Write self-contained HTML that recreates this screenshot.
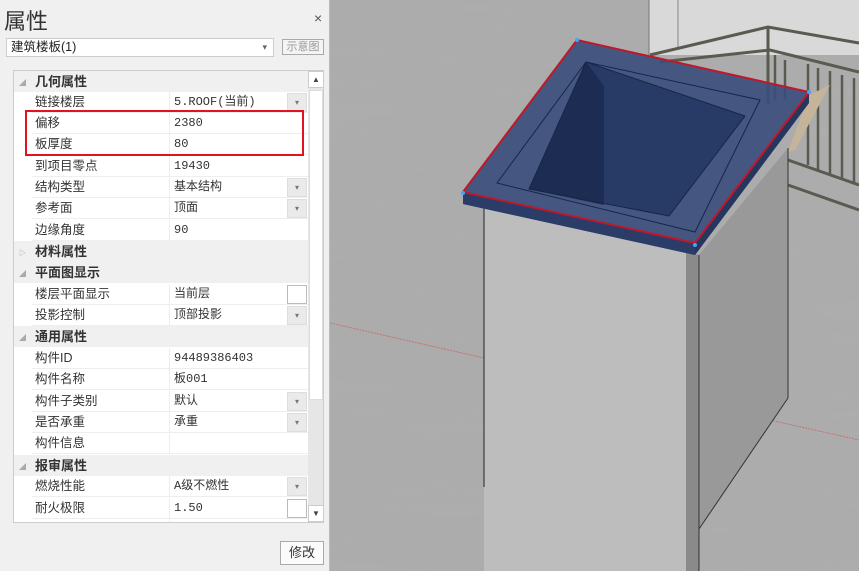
<!DOCTYPE html>
<html><head><meta charset="utf-8"><style>
*{margin:0;padding:0;box-sizing:border-box}
body{width:859px;height:571px;overflow:hidden;background:#a9a9a9;font-family:"Liberation Sans","Noto Sans CJK SC",sans-serif;position:relative}
#panel{position:absolute;left:0;top:0;width:330px;height:571px;background:#f0f0f0;border-right:1px solid #bbb}
.title{position:absolute;left:4px;top:4px;font-size:22px;color:#333}
.close{position:absolute;left:314px;top:10px;font-size:14px;color:#555}
.combo{position:absolute;left:6px;top:38px;width:268px;height:19px;background:#fff;border:1px solid #ccc;font-size:12.5px;padding:0 4px;line-height:17px;color:#222}
.combo:after{content:"▾";position:absolute;right:6px;top:0;font-size:9px;color:#666}
.btn1{position:absolute;left:282px;top:39px;width:42px;height:16px;border:1px solid #aaa;background:#f4f4f4;font-size:11px;color:#999;text-align:center;line-height:14px}
.grid{position:absolute;left:13px;top:70px;width:311px;height:453px;background:#fff;border:1px solid #ccc;overflow:hidden}
.row{position:absolute;left:0;height:21px;width:294px;font-size:12.5px;color:#333}
.row .n{position:absolute;left:18px;top:0;width:138px;height:21px;line-height:21px;padding-left:3px;border-bottom:1px solid #eee;border-right:1px solid #eee}
.row .v{position:absolute;left:156px;top:0;width:138px;height:21px;line-height:21px;padding-left:4px;font-family:"Liberation Mono","Noto Sans CJK SC",monospace;font-size:12px;border-bottom:1px solid #eee}
.row.h{background:#f0f0f0;font-weight:bold;font-size:13px}
.row.h span{position:absolute;left:21px;line-height:21px}
.row.h i{position:absolute;left:5px;top:7px;font-style:normal;font-size:7px;color:#aaa}
.dd{position:absolute;left:273px;top:1px;width:20px;height:19px;background:#eaeaea;border:1px solid #ddd;font-size:8px;color:#777;text-align:center;line-height:18px}
.wb{position:absolute;left:273px;top:1px;width:20px;height:19px;background:#fff;border:1px solid #bbb}
.sb{position:absolute;left:294px;top:0;width:16px;height:451px;background:#e6e6e6}
.sb .th{position:absolute;left:1px;top:19px;width:14px;height:310px;background:#fff;border:1px solid #ddd}
.sb .up,.sb .dn{position:absolute;left:0;width:16px;height:17px;background:#fff;border:1px solid #ccc;font-size:8px;text-align:center;line-height:15px;color:#444}
.redbox{position:absolute;left:25px;top:110px;width:279px;height:46px;border:2.5px solid #e0141e}
.mod{position:absolute;left:280px;top:541px;width:44px;height:24px;border:1px solid #aaa;background:#fbfbfb;font-size:13px;text-align:center;line-height:22px;color:#333}
</style></head><body>
<svg style="position:absolute;left:0;top:0" width="859" height="571">
<defs><filter id="n"><feTurbulence baseFrequency="0.01 0.05" numOctaves="2" seed="3"/><feColorMatrix values="0 0 0 0 0.4 0 0 0 0 0.4 0 0 0 0 0.4 0 0 0 -1.5 1.0"/></filter></defs>
<rect x="330" y="0" width="529" height="571" fill="#adadad"/>
<rect x="330" y="0" width="529" height="571" filter="url(#n)" opacity="0.35"/>
<rect x="649" y="0" width="210" height="55" fill="#d9d9d9"/>
<line x1="678" y1="0" x2="678" y2="50" stroke="#888"/>
<line x1="649" y1="0" x2="649" y2="55" stroke="#777"/>
<g stroke="#5a5a50" stroke-width="3" fill="none">
<polyline points="650,55 768,27 859,43"/><polyline points="660,62 770,50 859,72"/>
<line x1="768" y1="27" x2="768" y2="105"/>
<polyline points="788,160 859,185"/><polyline points="788,185 859,210"/>
</g>
<g stroke="#5a5a50" stroke-width="2.5">
<line x1="775" y1="55" x2="775" y2="100"/><line x1="785" y1="60" x2="785" y2="100"/>
<line x1="808" y1="64" x2="808" y2="165"/><line x1="818" y1="68" x2="818" y2="170"/><line x1="830" y1="71" x2="830" y2="175"/><line x1="842" y1="75" x2="842" y2="178"/><line x1="854" y1="78" x2="854" y2="182"/>
</g>
<polygon points="809,95 830,85 795,150 788,152" fill="#c6b49a"/>
<line x1="330" y1="323" x2="484" y2="358" stroke="#c66" stroke-width="0.8" stroke-dasharray="2,1"/>
<line x1="770" y1="420" x2="859" y2="440" stroke="#c66" stroke-width="0.8" stroke-dasharray="2,1"/>
<polygon points="484,207 699,255 699,571 484,571" fill="#bdbdbd"/>
<polygon points="686,252 699,255 699,571 686,571" fill="#8a8a8a"/>
<polygon points="699,255 788,148 788,398 699,529" fill="#999"/>
<line x1="484" y1="207" x2="484" y2="487" stroke="#222"/>
<line x1="699" y1="255" x2="699" y2="571" stroke="#333"/>
<line x1="788" y1="148" x2="788" y2="398" stroke="#333"/>
<line x1="699" y1="529" x2="788" y2="398" stroke="#333"/>
<polygon points="463,192 577,40 809,92 809,103 695,255 463,204" fill="#3a4c7c" opacity="0.9"/>
<polygon points="463,192 695,243 695,255 463,204" fill="#2b3c68"/>
<polygon points="695,243 809,92 809,103 695,255" fill="#26375f"/>
<polygon points="529,189 586,62 745,116 669,216" fill="#283a66"/>
<polygon points="529,189 586,62 604,86 604,205" fill="#1d2c52"/>
<g stroke="#182548" stroke-width="1" fill="none">
<polygon points="497,183 586,62 760,100 695,232"/>
<polygon points="529,189 586,62 745,116 669,216"/>
</g>
<polygon points="463,192 577,40 809,92 695,243" fill="none" stroke="#c0182a" stroke-width="2"/>
<g fill="#4aa0ff"><circle cx="577" cy="40" r="2"/><circle cx="809" cy="92" r="2"/><circle cx="695" cy="245" r="2"/><circle cx="463" cy="193" r="2"/></g>
</svg>
<div id="panel">
<div class="title">属性</div><div class="close">×</div>
<div class="combo">建筑楼板(1)</div><div class="btn1">示意图</div>
<div class="grid">
<div class="row h" style="top:0"><i>◢</i><span>几何属性</span></div>
<div class="row" style="top:21px"><div class="n">链接楼层</div><div class="v">5.ROOF(当前)</div><div class="dd">▾</div></div>
<div class="row" style="top:42px"><div class="n">偏移</div><div class="v">2380</div></div>
<div class="row" style="top:63px"><div class="n">板厚度</div><div class="v">80</div></div>
<div class="row" style="top:85px"><div class="n">到项目零点</div><div class="v">19430</div></div>
<div class="row" style="top:106px"><div class="n">结构类型</div><div class="v">基本结构</div><div class="dd">▾</div></div>
<div class="row" style="top:127px"><div class="n">参考面</div><div class="v">顶面</div><div class="dd">▾</div></div>
<div class="row" style="top:149px"><div class="n">边缘角度</div><div class="v">90</div></div>
<div class="row h" style="top:170px"><i>▷</i><span>材料属性</span></div>
<div class="row h" style="top:191px"><i>◢</i><span>平面图显示</span></div>
<div class="row" style="top:213px"><div class="n">楼层平面显示</div><div class="v">当前层</div><div class="wb"></div></div>
<div class="row" style="top:234px"><div class="n">投影控制</div><div class="v">顶部投影</div><div class="dd">▾</div></div>
<div class="row h" style="top:255px"><i>◢</i><span>通用属性</span></div>
<div class="row" style="top:277px"><div class="n">构件ID</div><div class="v">94489386403</div></div>
<div class="row" style="top:298px"><div class="n">构件名称</div><div class="v">板001</div></div>
<div class="row" style="top:320px"><div class="n">构件子类别</div><div class="v">默认</div><div class="dd">▾</div></div>
<div class="row" style="top:341px"><div class="n">是否承重</div><div class="v">承重</div><div class="dd">▾</div></div>
<div class="row" style="top:362px"><div class="n">构件信息</div><div class="v"></div></div>
<div class="row h" style="top:384px"><i>◢</i><span>报审属性</span></div>
<div class="row" style="top:405px"><div class="n">燃烧性能</div><div class="v">A级不燃性</div><div class="dd">▾</div></div>
<div class="row" style="top:427px"><div class="n">耐火极限</div><div class="v">1.50</div><div class="wb"></div></div>
<div class="row" style="top:448px"><div class="n"></div><div class="v"></div></div>
<div class="sb"><div class="up" style="top:0">▲</div><div class="th"></div><div class="dn" style="top:434px">▼</div></div>
</div>
<div class="redbox"></div>
<div class="mod">修改</div>
</div>
</body></html>
